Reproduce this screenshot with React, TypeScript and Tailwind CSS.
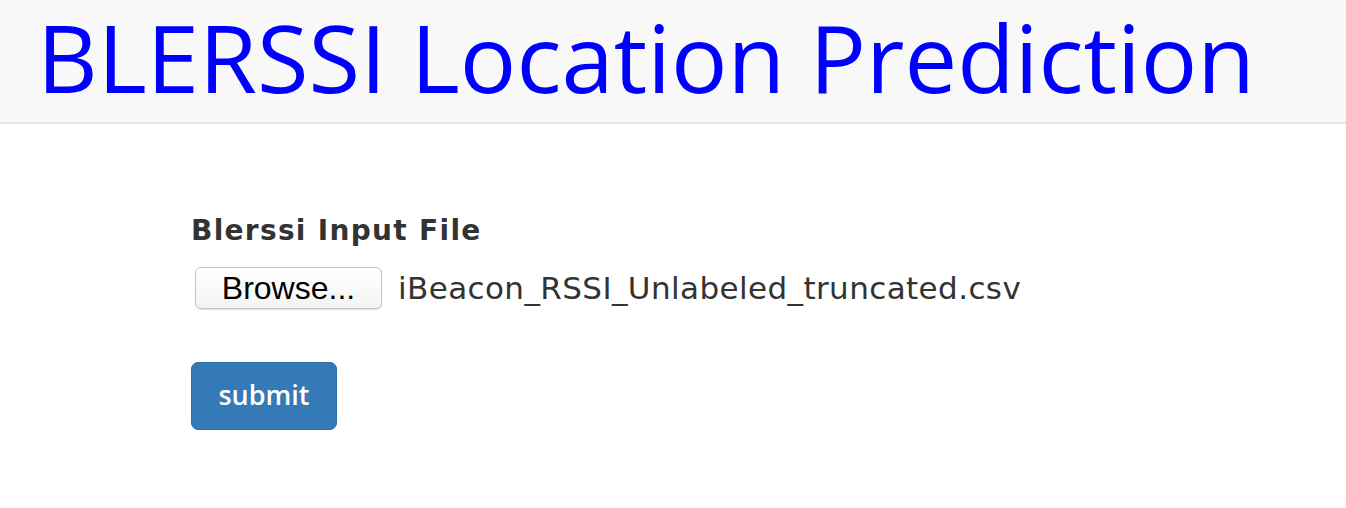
export default function App() {
  return (
    <div className="min-h-[508px] bg-white font-['Open_Sans',sans-serif] text-[#333]">
      <header className="h-[124px] border-b-2 border-[#e7e7e7] bg-[#f8f8f8] pl-[37px]">
        <h1 className="pt-[1px] text-[94px] leading-[112px] text-[#0000ff]">BLERSSI Location Prediction</h1>
      </header>

      <main className="pl-[191px] pt-[87px]">
        <label className="block font-['DejaVu_Sans',sans-serif] text-[28px] font-bold leading-[40px] tracking-[1.3px]">
          Blerssi Input File
        </label>
        <div className="mt-[14px] flex items-center gap-[16px]">
          <button className="ml-[4px] h-[42px] w-[187px] rounded-[6px] border border-[#c4c4c4] bg-gradient-to-b from-white to-[#f4f4f4] font-['Liberation_Sans',sans-serif] text-[32px] leading-[40px] text-black shadow-[0_1px_1px_rgba(0,0,0,0.12)]">
            Browse...
          </button>
          <span className="font-['DejaVu_Sans',sans-serif] text-[31px] tracking-[0.4px]">
            iBeacon_RSSI_Unlabeled_truncated.csv
          </span>
        </div>
        <button className="mt-[50px] h-[68px] w-[146px] rounded-[7px] border border-[#2e6da4] bg-[#337ab7] text-[27px] font-semibold text-white">
          submit
        </button>
      </main>
    </div>
  );
}
